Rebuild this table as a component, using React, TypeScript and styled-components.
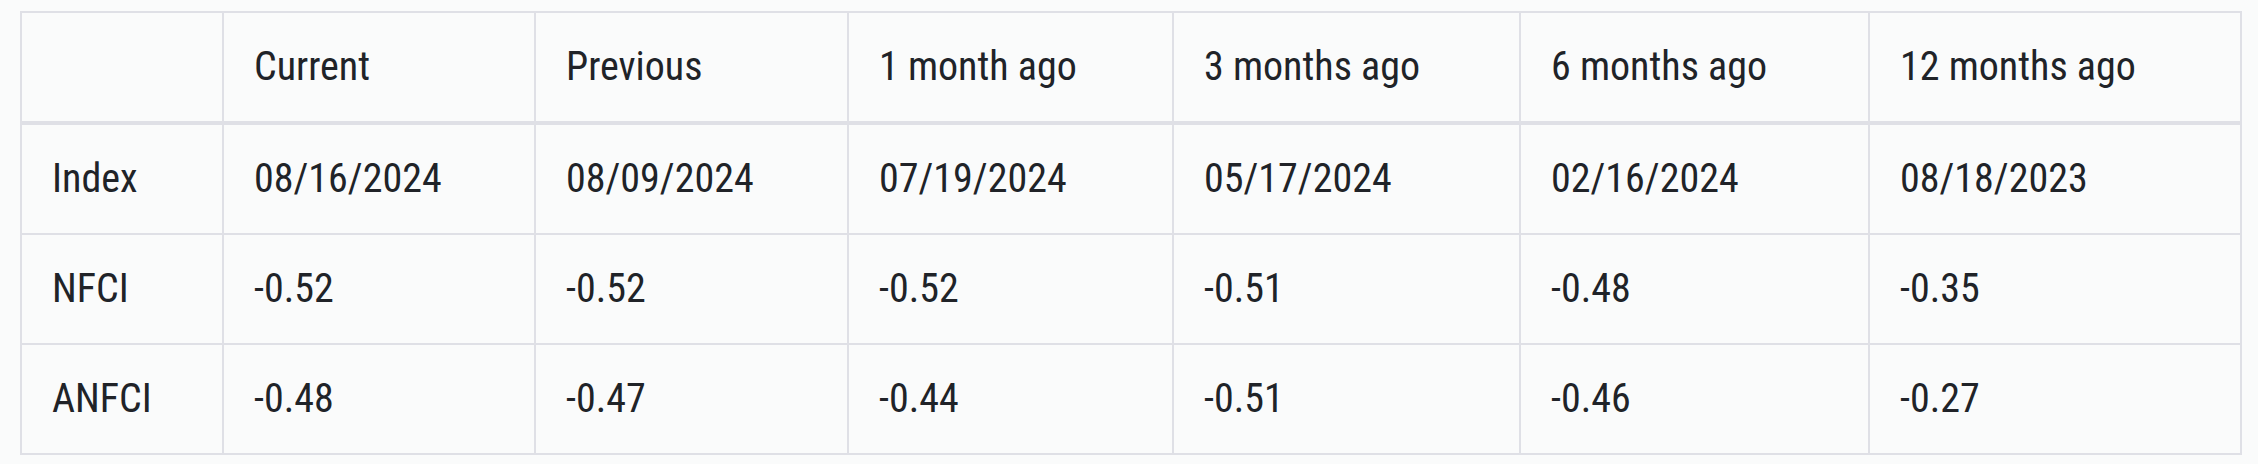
import React from "react";
import styled, { createGlobalStyle } from "styled-components";

const GlobalStyle = createGlobalStyle`
  html, body {
    margin: 0;
    padding: 0;
    background: #fafbfb;
  }
  body {
    font-family: "Roboto Condensed", Roboto, "Liberation Sans", sans-serif;
    font-stretch: condensed;
  }
`;

const Page = styled.div`
  padding: 11px 18px 10px 20px;
`;

const Table = styled.table`
  width: 2220px;
  border-collapse: collapse;
  table-layout: fixed;
  border: 2px solid #dfe0e6;
  font-family: "Roboto Condensed", Roboto, "Liberation Sans", sans-serif;
  font-stretch: condensed;
  color: #202328;
`;

const HeadRow = styled.tr`
  border-bottom: 4px solid #dfe0e6;
`;

const BodyRow = styled.tr`
  border-top: 2px solid #dfe0e6;
`;

const Cell = styled.td`
  border-left: 2px solid #dfe0e6;
  padding: 31px 30px;
  font-size: 40px;
  line-height: 46px;
  font-weight: 400;
  text-align: left;
  white-space: nowrap;
`;

const HeadCell = styled(Cell).attrs({ as: "th" })``;

const widths = [202, 312, 313, 325, 347, 349, 372];

const headers = ["", "Current", "Previous", "1 month ago", "3 months ago", "6 months ago", "12 months ago"];

const rows: string[][] = [
  ["Index", "08/16/2024", "08/09/2024", "07/19/2024", "05/17/2024", "02/16/2024", "08/18/2023"],
  ["NFCI", "-0.52", "-0.52", "-0.52", "-0.51", "-0.48", "-0.35"],
  ["ANFCI", "-0.48", "-0.47", "-0.44", "-0.51", "-0.46", "-0.27"],
];

export default function App() {
  return (
    <>
      <GlobalStyle />
      <Page>
        <Table>
          <colgroup>
            {widths.map((w, i) => (
              <col key={i} style={{ width: w }} />
            ))}
          </colgroup>
          <thead>
            <HeadRow>
              {headers.map((h, i) => (
                <HeadCell key={i}>{h}</HeadCell>
              ))}
            </HeadRow>
          </thead>
          <tbody>
            {rows.map((r, ri) => (
              <BodyRow key={ri}>
                {r.map((c, ci) => (
                  <Cell key={ci}>{c}</Cell>
                ))}
              </BodyRow>
            ))}
          </tbody>
        </Table>
      </Page>
    </>
  );
}
